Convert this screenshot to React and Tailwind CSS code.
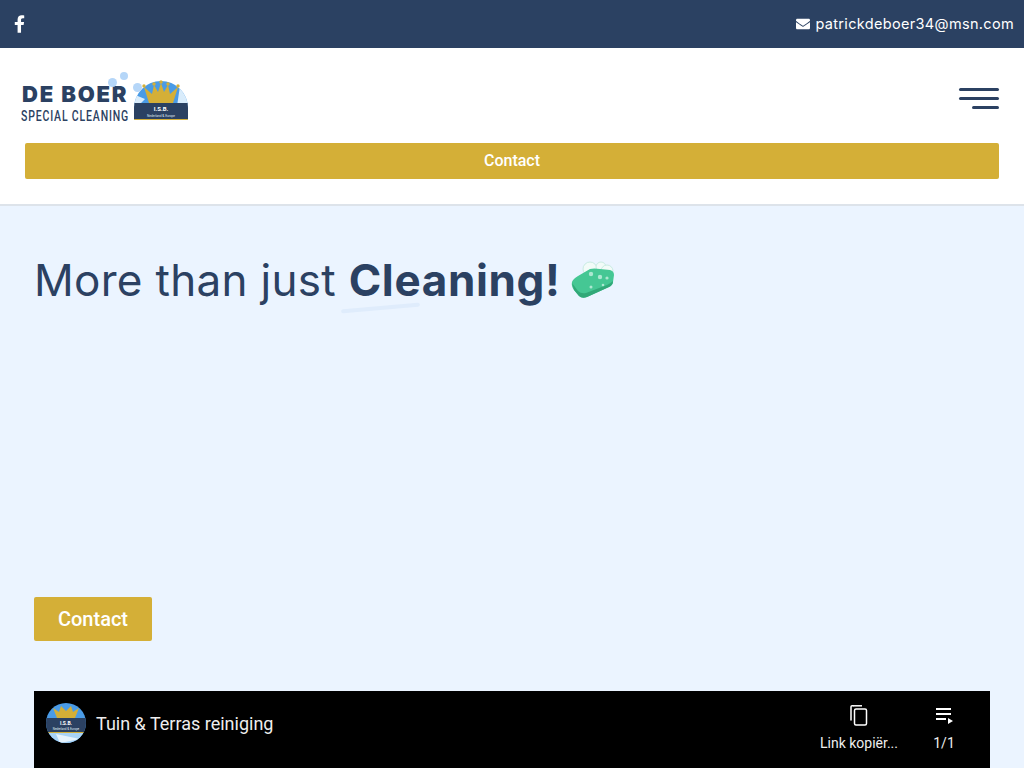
const navy = '#2b4162';
const gold = '#d4af37';

const CrownShape = () => (
  <g fill={gold}>
    <path d="M11 15 L19 22 L21 13 L25 20 L28 11 L31 20 L35 13 L37 22 L45 15 L40 31 H16 Z" />
    <circle cx="11" cy="14" r="1.7" />
    <circle cx="21" cy="12" r="1.7" />
    <circle cx="28" cy="10" r="1.7" />
    <circle cx="35" cy="12" r="1.7" />
    <circle cx="45" cy="14" r="1.7" />
  </g>
);

const Crown = () => (
  <svg viewBox="0 0 56 50" className="w-[56px] h-[50px]">
    <defs>
      <clipPath id="dome"><path d="M1 36 A27 27 0 0 1 55 36 V47 Q55 48 54 48 H2 Q1 48 1 47 Z" /></clipPath>
    </defs>
    <g clipPath="url(#dome)">
      <rect width="56" height="50" fill="#4a9be6" />
      <path d="M0 22 L12 27 L5 34 H0Z M47 14 L56 24 V34 H44 Z" fill="#d9ecfb" />
      <rect y="31" width="56" height="16" fill={navy} />
      <rect y="47" width="56" height="1.5" fill={gold} />
    </g>
    <CrownShape />
    <text x="28" y="39" textAnchor="middle" fontSize="6" fontWeight="700" fill="#fff" fontFamily="Roboto, sans-serif">I.S.B.</text>
    <text x="28" y="45" textAnchor="middle" fontSize="3.2" fill="#dfe6ee" fontFamily="Roboto, sans-serif">Nederland &amp; Europe</text>
  </svg>
);

const Logo = () => (
  <div className="relative w-[168px] h-[50px]">
    <div className="absolute left-[1px] top-[12px] font-['Inter',sans-serif] font-black text-[22px] leading-[20px] tracking-[1.8px] text-[#2b4162] whitespace-nowrap">DE BOER</div>
    <div className="absolute left-0 top-[36px] w-[108px] font-['Roboto',sans-serif] font-medium text-[15px] leading-[16px] tracking-[1.2px] text-[#2b4162] whitespace-nowrap origin-left scale-x-[0.7]">SPECIAL CLEANING</div>
    <div className="absolute left-[112px] top-0"><Crown /></div>
    <span className="absolute left-[87px] top-[6px] size-[9px] rounded-full bg-[#b5d6f8]" />
    <span className="absolute left-[99px] top-0 size-[8px] rounded-full bg-[#b5d6f8]" />
    <span className="absolute left-[112px] top-[11px] size-[9px] rounded-full bg-[#b5d6f8]" />
  </div>
);

const Soap = () => (
  <svg viewBox="0 0 46 40" className="w-[46px] h-[40px]">
    <g fill="#f2fbf8" stroke="#c9ece3" strokeWidth="1">
      <circle cx="20" cy="9" r="7" />
      <circle cx="31" cy="7" r="5" />
      <circle cx="37" cy="11" r="6" />
    </g>
    <path d="M2 22 Q3 19 8 16 L20 9 Q24 8 30 9 L40 10 Q44 11 44 15 L43 22 Q43 25 39 27 L17 37 Q12 39 9 36 L4 30 Q1 26 2 22Z" fill="#45c794" />
    <path d="M2 23 L4 30 L9 36 Q12 39 17 37 L39 27 Q43 25 43 21 Q41 23 37 25 L16 33 Q11 34 8 31 Z" fill="#31a878" />
    <g fill="#d8f5ea" opacity="0.7">
      <circle cx="21" cy="14" r="2.2" />
      <circle cx="30" cy="17" r="2.2" />
      <circle cx="37" cy="18" r="1.6" />
      <circle cx="21" cy="27" r="1.5" />
      <circle cx="33" cy="25" r="1.3" />
    </g>
  </svg>
);

const Avatar = () => (
  <svg viewBox="0 0 40 40" className="size-[40px] rounded-full">
    <rect width="40" height="40" fill="#4a9be6" />
    <path d="M0 30 H40 V40 H0 Z" fill="#a9d3f5" />
    <path d="M10 31 L34 36 L14 40 Z" fill="#e6f3fc" />
    <path d="M7 5 L13 9 L15 3 L20 8 L25 3 L27 9 L33 5 L29 15 H11 Z" fill={gold} />
    <rect y="15" width="40" height="14" fill={navy} />
    <rect y="29" width="40" height="1" fill={gold} />
    <text x="20" y="22" textAnchor="middle" fontSize="5" fontWeight="700" fill="#fff" fontFamily="Roboto, sans-serif">I.S.B.</text>
    <text x="20" y="27" textAnchor="middle" fontSize="3" fill="#dfe6ee" fontFamily="Roboto, sans-serif">Nederland &amp; Europe</text>
  </svg>
);

const App = () => {
  return (
    <div className="h-screen overflow-hidden flex flex-col bg-[#ebf4ff]">
      <div className="h-[48px] shrink-0 bg-[#2b4162] flex items-center justify-between pl-[14px] pr-[10px] text-white">
        <svg viewBox="0 0 320 512" className="w-[11px] h-[18px]" fill="#fff">
          <path d="M279.14 288l14.22-92.66h-88.91v-60.13c0-25.35 12.42-50.06 52.24-50.06h40.42V6.26S260.43 0 225.36 0c-73.22 0-121.08 44.38-121.08 124.72v70.62H22.89V288h81.39v224h100.17V288z" />
        </svg>
        <div className="flex items-center gap-[5px]">
          <svg viewBox="0 0 512 512" className="size-[14px]" fill="#fff">
            <path d="M502.3 190.8c3.9-3.1 9.7-.2 9.7 4.7V400c0 26.5-21.5 48-48 48H48c-26.5 0-48-21.5-48-48V195.6c0-5 5.7-7.8 9.7-4.7 22.4 17.4 52.1 39.5 154.1 113.6 21.1 15.4 56.7 47.8 92.2 47.6 35.7.3 72-32.8 92.3-47.6 102-74.1 131.6-96.3 154-113.7zM256 320c23.2.4 56.6-29.2 73.4-41.4 132.7-96.3 142.8-104.7 173.4-128.7 5.8-4.5 9.2-11.5 9.2-18.9v-19c0-26.5-21.5-48-48-48H48C21.5 64 0 85.5 0 112v19c0 7.4 3.4 14.3 9.2 18.9 30.6 23.9 40.7 32.4 173.4 128.7 16.8 12.2 50.2 41.8 73.4 41.4z" />
          </svg>
          <span className="font-['Inter',sans-serif] text-[14.5px] tracking-[0.33px] leading-none">patrickdeboer34@msn.com</span>
        </div>
      </div>

      <header className="shrink-0 h-[158px] bg-white border-b-2 border-[#dde3ea] pt-[24px]">
        <div className="flex items-center justify-between pl-[21px] pr-[25px]">
          <Logo />
          <div className="flex flex-col items-end gap-[6px] mt-[2px]">
            <span className="block w-[40px] h-[3px] rounded bg-[#2b4162]" />
            <span className="block w-[40px] h-[3px] rounded bg-[#2b4162]" />
            <span className="block w-[27px] h-[3px] rounded bg-[#2b4162]" />
          </div>
        </div>
        <div className="mt-[21px] mx-[25px] h-[36px] rounded-[2px] bg-[#d4af37] flex items-center justify-center">
          <span className="font-['Roboto',sans-serif] font-medium text-[16px] text-white">Contact</span>
        </div>
      </header>

      <main className="flex-1 min-h-0 px-[34px] pt-[45px]">
        <div className="flex items-center h-[58px]">
          <h1 className="relative font-['Inter',sans-serif] text-[44px] leading-[58px] tracking-[0.3px] text-[#2b4162] whitespace-nowrap">
            More than just <span className="font-bold tracking-[0.65px]">Cleaning!</span>
            <span className="absolute left-[307px] top-[55px] w-[79px] h-[4px] bg-[#dfecfc] rounded-full -rotate-[5deg]" />
          </h1>
          <div className="ml-[9px] -mt-[1px]"><Soap /></div>
        </div>

        <div className="mt-[288px]">
          <button className="w-[118px] h-[44px] rounded-[2px] bg-[#d4af37] text-white font-['Roboto',sans-serif] font-medium text-[20px]">Contact</button>
        </div>

        <div className="mt-[50px] h-[538px] bg-black flex items-start justify-between pl-[12px] pr-[9px] pt-[12px]">
          <div className="flex items-center gap-[10px]">
            <Avatar />
            <span className="font-['Roboto',sans-serif] text-[18px] text-[#eeeeee]">Tuin &amp; Terras reiniging</span>
          </div>
          <div className="flex">
            <div className="w-[96px] flex flex-col items-center pt-[1px]">
              <svg viewBox="0 0 24 24" className="size-[24px] -mt-[1px]" fill="none" stroke="#fff" strokeWidth="1.5">
                <path d="M6 2.8 H5 Q4 2.8 4 3.8 V17" strokeLinecap="round" />
                <path d="M6 2.8 H15" />
                <rect x="7.5" y="6" width="12" height="16" rx="1.5" />
              </svg>
              <span className="mt-[6px] font-['Roboto',sans-serif] text-[14px] text-[#eeeeee] whitespace-nowrap">Link kopiër...</span>
            </div>
            <div className="w-[74px] flex flex-col items-center pt-[1px]">
              <svg viewBox="0 0 24 24" className="size-[24px] -mt-[1px]" fill="#fff">
                <path d="M4 5h15v2H4zM4 10h15v2H4zM4 15h10v2H4zM16 15l5 3-5 3z" />
              </svg>
              <span className="mt-[6px] font-['Roboto',sans-serif] text-[14px] text-[#eeeeee]">1/1</span>
            </div>
          </div>
        </div>
      </main>
    </div>
  );
};

export default App;
